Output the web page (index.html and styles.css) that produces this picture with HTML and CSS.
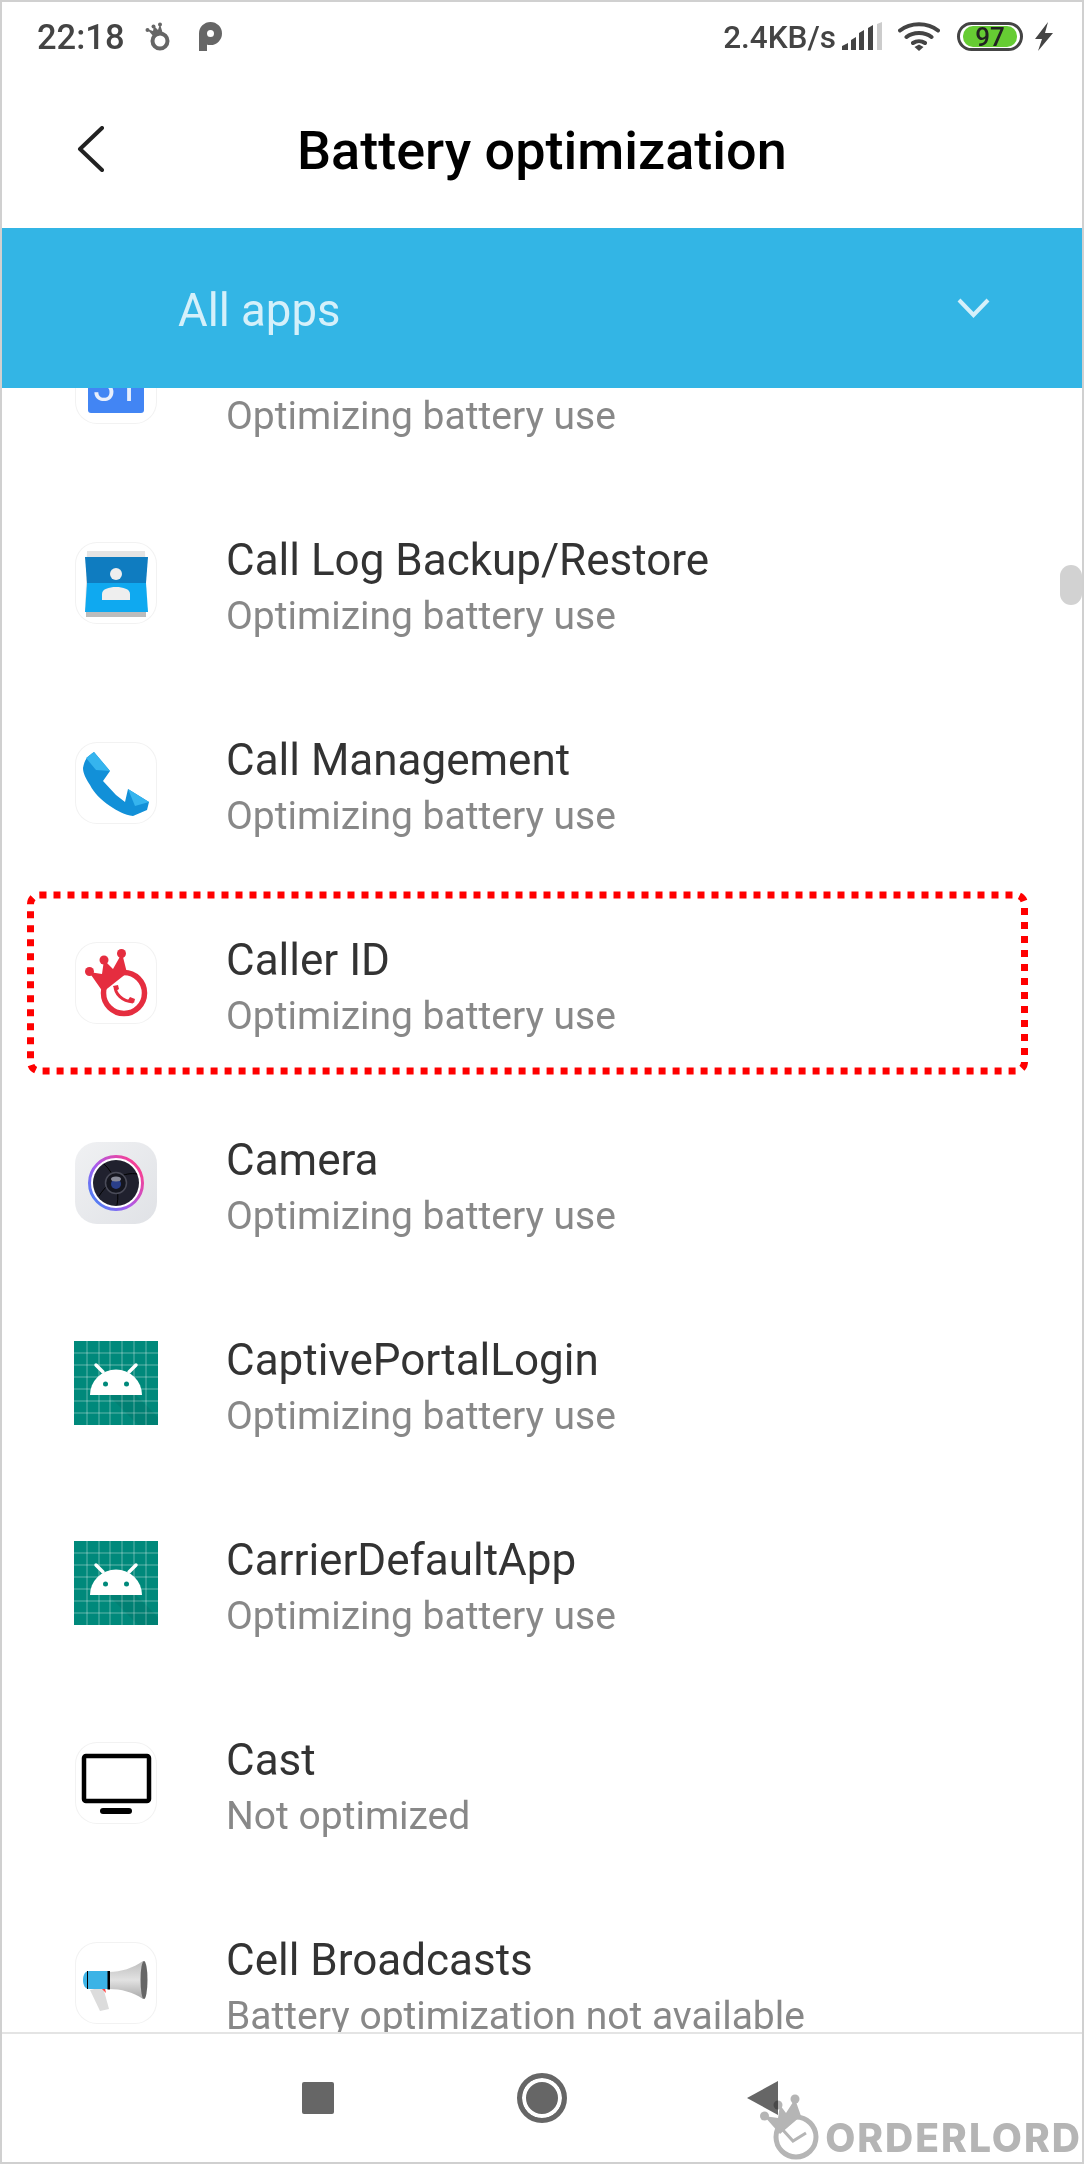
FILE: index.html
```html
<!DOCTYPE html>
<html lang="en">
<head>
    <meta charset="UTF-8">
    <title>Battery optimization</title>
    <link rel="stylesheet" href="styles.css">
</head>
<body>

<svg class="defs" width="0" height="0">
    <defs>
        <symbol id="android" viewBox="0 0 84 84">
            <rect width="84" height="84" fill="#00897b"/>
            <path d="M0 12H84M0 24H84M0 36H84M0 48H84M0 60H84M0 72H84M13 0V84M25 0V84M36 0V84M48 0V84M60 0V84M72 0V84" stroke="#fff" stroke-opacity=".38" stroke-width="1"/>
            <path d="M34 54H62L84 76V84H64Z" fill="#000" opacity=".06"/>
            <path d="M16 54A26 25.500 0 0 1 68 54Z" fill="#fff"/>
            <path d="M22 24L29 31M62 24L55 31" stroke="#fff" stroke-width="3.500" stroke-linecap="round"/>
            <circle cx="31.500" cy="43" r="2.500" fill="#00897b"/>
            <circle cx="52.500" cy="43" r="2.500" fill="#00897b"/>
        </symbol>
        <linearGradient id="lensRing" x1="0" y1="1" x2="1" y2="0.2">
            <stop offset="0" stop-color="#2f8cf5"/>
            <stop offset="0.45" stop-color="#a45cf0"/>
            <stop offset="1" stop-color="#ff3d8b"/>
        </linearGradient>
        <linearGradient id="hornFill" x1="0" y1="0" x2="0" y2="1">
            <stop offset="0" stop-color="#bdbdbd"/>
            <stop offset="0.5" stop-color="#e2e2e2"/>
            <stop offset="1" stop-color="#a8a8a8"/>
        </linearGradient>
    </defs>
</svg>

<div class="phone">
    <div class="status-bar">
        <div class="status-left">
            <span class="time">22:18</span>
            <svg class="status-crown" width="27" height="29" viewBox="0 0 27 29">
                <circle cx="15" cy="19" r="7.500" fill="none" stroke="#666" stroke-width="4"/>
                <path d="M2 7L8 9L9 4L13 8L15 2L18 12L9 15Z" fill="#666"/>
                <circle cx="2.500" cy="8" r="2" fill="#666"/>
                <circle cx="8.500" cy="4.500" r="2" fill="#666"/>
                <circle cx="15" cy="2.500" r="2" fill="#666"/>
            </svg>
            <svg class="status-p" width="23" height="29" viewBox="0 0 23 29">
                <circle cx="11.500" cy="11.500" r="7.500" fill="none" stroke="#666" stroke-width="8"/>
                <rect y="11" width="8" height="18" fill="#666"/>
            </svg>
        </div>
        <div class="status-right">
            <span class="speed">2.4KB/s</span>
            <svg class="signal" width="40" height="28" viewBox="0 0 40 28">
                <path d="M0 28V24L6 21V28ZM9 28V18L14 15V28ZM17 28V11L22 8V28ZM26 28V6L31 3V28Z" fill="#444"/>
                <path d="M35 28V2L40 0V28Z" fill="#ccc"/>
            </svg>
            <svg class="wifi" width="42" height="30" viewBox="0 0 42 30">
                <path d="M2 9.500C12.500 1 29.500 1 40 9.500M8.500 16C15 10.500 27 10.500 33.500 16M15 22C18.500 19.500 23.500 19.500 27 22" fill="none" stroke="#444" stroke-width="4" stroke-linecap="round"/>
                <path d="M16.500 26L21 23.500L25.500 26L21 30Z" fill="#444"/>
            </svg>
            <div class="battery"><span class="battery-level">97</span></div>
            <svg class="bolt" width="18" height="29" viewBox="0 0 18 29">
                <path d="M13 0L0 17H7L3 29L18 11H10Z" fill="#444"/>
            </svg>
        </div>
    </div>

    <div class="title-bar">
        <svg class="back" width="28" height="46" viewBox="0 0 28 46">
            <path d="M25 2L3 23L25 44" fill="none" stroke="#222" stroke-width="4" stroke-linecap="round" stroke-linejoin="round"/>
        </svg>
        <h1>Battery optimization</h1>
    </div>

    <div class="filter-bar">
        <span class="filter-label">All apps</span>
        <svg width="33" height="20" viewBox="0 0 33 20">
            <path d="M2 2L16.500 17L31 2" fill="none" stroke="#d5f0fa" stroke-width="4"/>
        </svg>
    </div>

    <div class="list">
        <div class="rows">
            <div class="row">
                <div class="tile">
                    <svg width="82" height="82" viewBox="0 0 82 82">
                        <rect x="13" y="8" width="56" height="63" rx="3" fill="#4285f4"/>
                        <text x="41" y="59" text-anchor="middle" class="cal-day">31</text>
                    </svg>
                </div>
                <div class="row-text">
                    <div class="row-name"></div>
                    <div class="row-state">Optimizing battery use</div>
                </div>
            </div>
            <div class="row">
                <div class="tile">
                    <svg width="82" height="82" viewBox="0 0 82 82">
                        <path d="M12 9H70L72 70H10Z" fill="#e4e4e4"/>
                        <path d="M11 68H71L71 75H11Z" fill="#bcbcbc"/>
                        <path d="M10 15H73L71 41H12Z" fill="#0f7cc0"/>
                        <path d="M12 41H71L73 70H10Z" fill="#0fa9f0"/>
                        <circle cx="41" cy="32" r="6" fill="#eee"/>
                        <path d="M27 58V52C27 47 34 45 41 45C48 45 55 47 55 52V58Z" fill="#eee"/>
                    </svg>
                </div>
                <div class="row-text">
                    <div class="row-name">Call Log Backup/Restore</div>
                    <div class="row-state">Optimizing battery use</div>
                </div>
            </div>
            <div class="row">
                <div class="tile">
                    <svg width="82" height="82" viewBox="0 0 82 82">
                        <path d="M19 10L35 29L28 39L41 53L50 60L53 47L74 60L72 68L58 74C50 73 42 69 35 64C26 58 19 51 15 43C11 37 8 31 8 26C9 20 11 15 19 10Z" fill="#1290d8"/>
                        <path d="M53 47L74 60L60 64Z" fill="#35b4ee"/>
                        <path d="M19 10L35 29L21 28L11 16Z" fill="#35b4ee"/>
                    </svg>
                </div>
                <div class="row-text">
                    <div class="row-name">Call Management</div>
                    <div class="row-state">Optimizing battery use</div>
                </div>
            </div>
            <div class="row">
                <div class="tile">
                    <svg width="82" height="82" viewBox="0 0 82 82">
                        <circle cx="49" cy="51" r="20.500" fill="none" stroke="#e52d3f" stroke-width="5.500"/>
                        <path d="M14 30L27 32L29 18L38 27L47 11L52 31L28 50Z" fill="#e52d3f"/>
                        <circle cx="14.500" cy="29.500" r="4.500" fill="#e52d3f"/>
                        <circle cx="29" cy="18" r="4.500" fill="#e52d3f"/>
                        <circle cx="46.500" cy="11.500" r="4.500" fill="#e52d3f"/>
                        <path d="M40 44C40 52 47 59 58 60" fill="none" stroke="#e52d3f" stroke-width="3"/>
                        <path d="M38 44L43 43L44 47L41 49ZM53 58L55 55L60 57L59 61Z" fill="#e52d3f"/>
                    </svg>
                </div>
                <div class="row-text">
                    <div class="row-name">Caller ID</div>
                    <div class="row-state">Optimizing battery use</div>
                </div>
            </div>
            <div class="row">
                <div class="tile tile-camera">
                    <svg width="82" height="82" viewBox="0 0 82 82">
                        <circle cx="41" cy="41" r="26.500" fill="#fff" stroke="url(#lensRing)" stroke-width="3"/>
                        <circle cx="41" cy="41" r="23" fill="#20212e"/>
                        <path d="M29 22C40 32 45 48 42 63M62 32C50 30 36 36 24 54" fill="none" stroke="#000" stroke-width="1"/>
                        <circle cx="41" cy="41" r="10.500" fill="#15161f" stroke="#4a4b58" stroke-width="1.500"/>
                        <circle cx="41" cy="42" r="5" fill="#2a3f8a"/>
                        <ellipse cx="41" cy="37" rx="5" ry="2.500" fill="#888a98"/>
                    </svg>
                </div>
                <div class="row-text">
                    <div class="row-name">Camera</div>
                    <div class="row-state">Optimizing battery use</div>
                </div>
            </div>
            <div class="row">
                <div class="tile-plain"><svg width="84" height="84"><use href="#android"/></svg></div>
                <div class="row-text">
                    <div class="row-name">CaptivePortalLogin</div>
                    <div class="row-state">Optimizing battery use</div>
                </div>
            </div>
            <div class="row">
                <div class="tile-plain"><svg width="84" height="84"><use href="#android"/></svg></div>
                <div class="row-text">
                    <div class="row-name">CarrierDefaultApp</div>
                    <div class="row-state">Optimizing battery use</div>
                </div>
            </div>
            <div class="row">
                <div class="tile">
                    <svg width="82" height="82" viewBox="0 0 82 82">
                        <rect x="9" y="14" width="65" height="45" rx="2" fill="none" stroke="#000" stroke-width="4.500"/>
                        <rect x="25" y="66" width="32" height="6" rx="3" fill="#000"/>
                    </svg>
                </div>
                <div class="row-text">
                    <div class="row-name">Cast</div>
                    <div class="row-state">Not optimized</div>
                </div>
            </div>
            <div class="row">
                <div class="tile">
                    <svg width="82" height="82" viewBox="0 0 82 82">
                        <path d="M15 48L28 45L34 67L25 69Z" fill="#dcdcdc"/>
                        <path d="M27 47L30 46L31 51Z" fill="#f44"/>
                        <path d="M34 30C46 30 58 26 68 19V57C58 50 46 47 34 47Z" fill="url(#hornFill)"/>
                        <ellipse cx="69" cy="38" rx="3.500" ry="19" fill="#666"/>
                        <path d="M14 29H34V47H14C10 47 8 43 8 38C8 33 10 29 14 29Z" fill="#3bb3e6"/>
                        <path d="M12.500 29V47" stroke="#000" stroke-width="1"/>
                        <rect x="32.500" y="29" width="2.500" height="18.500" fill="#000"/>
                    </svg>
                </div>
                <div class="row-text">
                    <div class="row-name">Cell Broadcasts</div>
                    <div class="row-state">Battery optimization not available</div>
                </div>
            </div>
        </div>
    </div>

    <div class="nav-bar">
        <div class="nav-square"></div>
        <div class="nav-circle"></div>
        <svg class="nav-back" width="31" height="36" viewBox="0 0 31 36">
            <path d="M31 1V35L0 18Z" fill="#666"/>
        </svg>
    </div>

    <div class="scroll-thumb"></div>

    <svg class="highlight" width="1015" height="196" viewBox="0 0 1015 196">
        <rect x="8.500" y="8" width="994" height="176" rx="9" fill="none" stroke="#f00" stroke-width="7" stroke-dasharray="7 7"/>
    </svg>

    <div class="watermark">
        <svg width="66" height="70" viewBox="0 0 66 70">
            <circle cx="36" cy="45" r="20" fill="none" stroke="#b5b5b5" stroke-width="5"/>
            <path d="M4 24L18 26L20 13L26 21L35 7L41 24L20 42Z" fill="#b5b5b5"/>
            <circle cx="4.500" cy="24" r="4.500" fill="#b5b5b5"/>
            <circle cx="18" cy="13" r="4.500" fill="#b5b5b5"/>
            <circle cx="35" cy="7" r="4.500" fill="#b5b5b5"/>
            <path d="M22 37L33 49L46 41" fill="none" stroke="#b5b5b5" stroke-width="3"/>
        </svg>
        <span>ORDERLORD</span>
    </div>
</div>

</body>
</html>
```

FILE: styles.css
```css
* {
    box-sizing: border-box;
}
body {
    margin: 0;
    font-family: 'Roboto', sans-serif;
    background: #fff;
}
.defs {
    position: absolute;
}
.phone {
    position: relative;
    display: flex;
    flex-direction: column;
    width: 1084px;
    height: 2164px;
    border: 2px solid #d0d0d0;
    background: #fff;
    overflow: hidden;
}
.status-bar {
    display: flex;
    justify-content: space-between;
    align-items: center;
    height: 68px;
    padding: 0 29px 0 35px;
    color: #444;
    font-weight: 500;
}
.status-left, .status-right {
    display: flex;
    align-items: center;
}
.time {
    font-size: 34.500px;
    width: 88px;
    white-space: nowrap;
    padding-top: 2px;
}
.status-crown {
    margin-left: 20px;
}
.status-p {
    margin-left: 27px;
}
.speed {
    font-size: 31.500px;
    white-space: nowrap;
    padding-top: 2px;
}
.signal {
    margin-left: 6px;
}
.wifi {
    margin-left: 16px;
}
.battery {
    display: flex;
    justify-content: center;
    align-items: center;
    width: 66px;
    height: 29px;
    margin-left: 17px;
    border: 3px solid #444;
    border-radius: 15px;
    padding: 1px 3px;
}
.battery-level {
    display: block;
    width: 100%;
    height: 100%;
    background: #66cc33;
    border-radius: 10px;
    color: #222;
    font-size: 26px;
    line-height: 22px;
    text-align: center;
}
.bolt {
    margin-left: 12px;
}
.title-bar {
    display: flex;
    align-items: center;
    height: 158px;
    padding-left: 75px;
}
.title-bar h1 {
    margin: 2px 0 0 192px;
    color: #000;
    font-size: 54px;
    font-weight: 500;
    white-space: nowrap;
}
.filter-bar {
    display: flex;
    justify-content: space-between;
    align-items: center;
    flex: none;
    height: 160px;
    padding: 0 92px 0 176px;
    background: #33b5e5;
    color: #d5f0fa;
}
.filter-label {
    font-size: 45.500px;
    padding-top: 5px;
}
.list {
    flex: 1;
    overflow: hidden;
    min-height: 0;
}
.rows {
    margin-top: -105px;
}
.row {
    display: flex;
    align-items: center;
    height: 200px;
    padding-left: 73px;
}
.tile {
    flex: none;
    width: 82px;
    height: 82px;
    border-radius: 22px;
    box-shadow: inset 0 0 0 1px #f2f2f2;
    background: #fff;
}
.tile svg, .tile-plain svg {
    display: block;
}
.tile-camera {
    background: linear-gradient(135deg, #f0f1f3, #e0e2e6);
    box-shadow: none;
}
.tile-plain {
    flex: none;
    width: 84px;
    height: 84px;
    margin-left: -1px;
    margin-right: -1px;
}
.cal-day {
    fill: #e8eefc;
    font-size: 42px;
    font-family: 'Roboto', sans-serif;
}
.row-text {
    margin-left: 69px;
    padding-top: 9px;
}
.row-name {
    min-height: 57px;
    color: #333;
    font-size: 44px;
    line-height: 57px;
    white-space: nowrap;
}
.row-state {
    color: #888;
    font-size: 39px;
    line-height: 55px;
    white-space: nowrap;
}
.nav-bar {
    display: flex;
    align-items: center;
    flex: none;
    height: 130px;
    padding-left: 300px;
    border-top: 2px solid #e4e4e4;
    background: #fff;
}
.nav-square {
    width: 32px;
    height: 32px;
    border-radius: 2px;
    background: #666;
}
.nav-circle {
    width: 50px;
    height: 50px;
    margin-left: 183px;
    border: 5px solid #666;
    border-radius: 50%;
    background: #666;
    box-shadow: inset 0 0 0 4px #fff;
}
.nav-back {
    margin-left: 180px;
}
.scroll-thumb {
    position: absolute;
    top: 563px;
    right: 0;
    width: 22px;
    height: 40px;
    border-radius: 11px;
    background: #d2d2d2;
}
.highlight {
    position: absolute;
    top: 885px;
    left: 20px;
}
.watermark {
    position: absolute;
    right: 0;
    bottom: 0;
    display: flex;
    align-items: flex-end;
    mix-blend-mode: multiply;
}
.watermark svg {
    margin-right: -1px;
}
.watermark span {
    margin-bottom: 2px;
    color: #b5b5b5;
    font-family: 'Inter', sans-serif;
    font-size: 39px;
    font-weight: 800;
    letter-spacing: 2px;
    line-height: 44px;
    white-space: nowrap;
}
```
